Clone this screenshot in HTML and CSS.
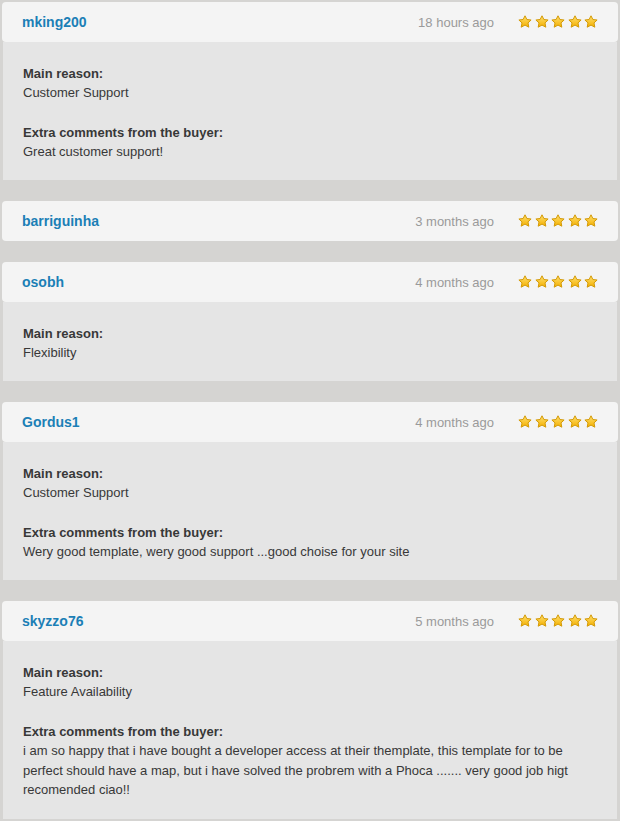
FILE: index.html
```html
<!DOCTYPE html>
<html lang="en">
<head>
    <meta charset="UTF-8">
    <meta name="viewport" content="width=device-width, initial-scale=1.0">
    <title>Buyer Reviews</title>
    <link rel="stylesheet" href="styles.css">
</head>
<body>
    <svg width="0" height="0" class="defs">
        <defs>
            <linearGradient id="starFill" x1="0" y1="0" x2="0" y2="1">
                <stop offset="0" stop-color="#ffe070"/>
                <stop offset="1" stop-color="#f4b000"/>
            </linearGradient>
            <symbol id="star" viewBox="0 0 14 14">
                <polygon points="7,0.8 8.9,4.5 13.1,5 10,7.9 10.8,12.2 7,10.1 3.2,12.2 4,7.9 0.9,5 5.1,4.5"
                         fill="url(#starFill)" stroke="#d39a08" stroke-width="1" stroke-linejoin="round"/>
            </symbol>
        </defs>
    </svg>

    <div class="review">
        <div class="review-head">
            <span class="user">mking200</span>
            <span class="time">18 hours ago</span>
            <span class="stars">
                <svg><use href="#star"/></svg><svg><use href="#star"/></svg><svg><use href="#star"/></svg><svg><use href="#star"/></svg><svg><use href="#star"/></svg>
            </span>
        </div>
        <div class="review-body">
            <div class="field">
                <div class="label">Main reason:</div>
                <div>Customer Support</div>
            </div>
            <div class="field">
                <div class="label">Extra comments from the buyer:</div>
                <div>Great customer support!</div>
            </div>
        </div>
    </div>

    <div class="review">
        <div class="review-head">
            <span class="user">barriguinha</span>
            <span class="time">3 months ago</span>
            <span class="stars">
                <svg><use href="#star"/></svg><svg><use href="#star"/></svg><svg><use href="#star"/></svg><svg><use href="#star"/></svg><svg><use href="#star"/></svg>
            </span>
        </div>
    </div>

    <div class="review">
        <div class="review-head">
            <span class="user">osobh</span>
            <span class="time">4 months ago</span>
            <span class="stars">
                <svg><use href="#star"/></svg><svg><use href="#star"/></svg><svg><use href="#star"/></svg><svg><use href="#star"/></svg><svg><use href="#star"/></svg>
            </span>
        </div>
        <div class="review-body">
            <div class="field">
                <div class="label">Main reason:</div>
                <div>Flexibility</div>
            </div>
        </div>
    </div>

    <div class="review">
        <div class="review-head">
            <span class="user">Gordus1</span>
            <span class="time">4 months ago</span>
            <span class="stars">
                <svg><use href="#star"/></svg><svg><use href="#star"/></svg><svg><use href="#star"/></svg><svg><use href="#star"/></svg><svg><use href="#star"/></svg>
            </span>
        </div>
        <div class="review-body">
            <div class="field">
                <div class="label">Main reason:</div>
                <div>Customer Support</div>
            </div>
            <div class="field">
                <div class="label">Extra comments from the buyer:</div>
                <div>Wery good template, wery good support ...good choise for your site</div>
            </div>
        </div>
    </div>

    <div class="review">
        <div class="review-head">
            <span class="user">skyzzo76</span>
            <span class="time">5 months ago</span>
            <span class="stars">
                <svg><use href="#star"/></svg><svg><use href="#star"/></svg><svg><use href="#star"/></svg><svg><use href="#star"/></svg><svg><use href="#star"/></svg>
            </span>
        </div>
        <div class="review-body">
            <div class="field">
                <div class="label">Main reason:</div>
                <div>Feature Availability</div>
            </div>
            <div class="field">
                <div class="label">Extra comments from the buyer:</div>
                <div class="comment">i am so happy that i have bought a developer access at their themplate, this template for to be perfect should have a map, but i have solved the probrem with a Phoca ....... very good job higt recomended ciao!!</div>
            </div>
        </div>
    </div>
</body>
</html>
```

FILE: styles.css
```css
body {
    margin: 0;
    padding: 2px 2px 0;
    background: #d5d4d2;
    font-family: "Liberation Sans", Arial, sans-serif;
    font-size: 13px;
    color: #383838;
}
.defs {
    position: absolute;
}
.review {
    margin-bottom: 21px;
}
.review-head {
    display: flex;
    align-items: center;
    height: 40px;
    padding: 0 20px;
    background: #f4f4f4;
    border-radius: 4px;
}
.user {
    flex: 1;
    font-size: 14px;
    font-weight: bold;
    color: #1b7fb6;
}
.time {
    color: #9a9a9a;
    margin-right: 24px;
}
.stars {
    display: flex;
    gap: 2.5px;
    margin-top: -1px;
}
.stars svg {
    width: 14px;
    height: 14px;
}
.review-body {
    margin: 0 1px;
    padding: 22px 20px 9px;
    background: #e5e5e5;
    line-height: 19px;
}
.field {
    margin-bottom: 21px;
}
.field:last-child {
    margin-bottom: 10px;
}
.label {
    font-weight: bold;
}
.comment {
    line-height: 19.5px;
}
```
